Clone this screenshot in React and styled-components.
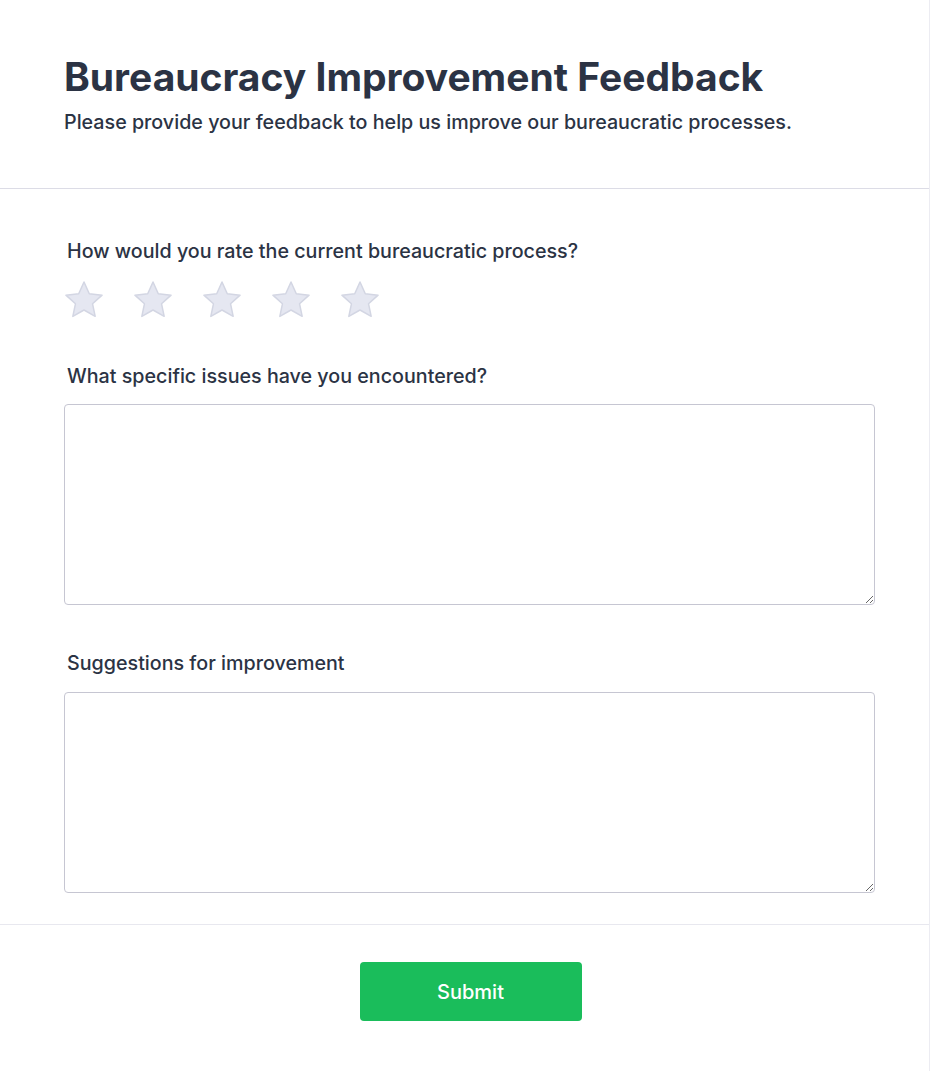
import React, { useState } from "react";
import styled, { createGlobalStyle } from "styled-components";

const GlobalStyle = createGlobalStyle`
  body {
    margin: 0;
    background: #ffffff;
    font-family: Inter, "Noto Sans", sans-serif;
  }
`;

const Card = styled.div`
  width: 929px;
  border-right: 1px solid #ececf2;
  background: #fff;
`;

const Header = styled.header`
  padding: 54px 64px 52px;
  border-bottom: 1px solid #dcdce6;
`;

const Title = styled.h1`
  margin: 0;
  font-size: 39px;
  line-height: 46px;
  font-weight: 700;
  color: #2b3344;
`;

const Subtitle = styled.p`
  margin: 8px 0 0;
  font-size: 19.7px;
  line-height: 28px;
  font-weight: 500;
  color: #2b3344;
`;

const Form = styled.form`
  padding: 48px 54px 31px 64px;
  border-bottom: 1px solid #e8e8ef;
`;

const Field = styled.div`
  margin-bottom: ${(p) => p.$gap ?? 44}px;
`;

const Label = styled.label`
  display: block;
  margin: 0 0 ${(p) => p.$below ?? 14}px 3px;
  font-size: 19.7px;
  line-height: 28px;
  font-weight: 500;
  color: #2b3344;
`;

const Stars = styled.div`
  display: flex;
  gap: 29px;
`;

const StarButton = styled.button`
  border: none;
  background: none;
  padding: 0;
  width: 40px;
  height: 40px;
  cursor: pointer;
  display: flex;
`;

const TextArea = styled.textarea`
  display: block;
  box-sizing: border-box;
  width: 811px;
  height: 201px;
  border: 1px solid #c6c6d2;
  border-radius: 4px;
  padding: 10px 12px;
  font-family: inherit;
  font-size: 16px;
  color: #2b3344;
  resize: vertical;
  outline: none;
`;

const Footer = styled.div`
  display: flex;
  justify-content: center;
  padding: 37px 0 50px 12px;
`;

const SubmitButton = styled.button`
  width: 222px;
  height: 59px;
  border: none;
  border-radius: 4px;
  background: #1abd5b;
  color: #fff;
  font-family: inherit;
  font-size: 20px;
  font-weight: 500;
  cursor: pointer;
`;

function Star({ filled }) {
  return (
    <svg width="40" height="40" viewBox="0 0 40 40">
      <path
        d="M20 2 L25.29 13.72 L38.07 15.13 L28.56 23.78 L31.17 36.37 L20 30 L8.83 36.37 L11.44 23.78 L1.93 15.13 L14.71 13.72 Z"
        fill={filled ? "#facc15" : "#e5e7f1"}
        stroke={filled ? "#eab308" : "#d3d6e3"}
        strokeWidth="1.5"
        strokeLinejoin="round"
      />
    </svg>
  );
}

export default function App() {
  const [rating, setRating] = useState(0);

  return (
    <Card>
      <GlobalStyle />
      <Header>
        <Title>Bureaucracy Improvement Feedback</Title>
        <Subtitle>Please provide your feedback to help us improve our bureaucratic processes.</Subtitle>
      </Header>
      <Form onSubmit={(e) => e.preventDefault()}>
        <Field $gap={42}>
          <Label $below={15}>How would you rate the current bureaucratic process?</Label>
          <Stars>
            {[1, 2, 3, 4, 5].map((n) => (
              <StarButton key={n} type="button" onClick={() => setRating(n)}>
                <Star filled={n <= rating} />
              </StarButton>
            ))}
          </Stars>
        </Field>
        <Field>
          <Label htmlFor="issues">What specific issues have you encountered?</Label>
          <TextArea id="issues" />
        </Field>
        <Field $gap={0}>
          <Label htmlFor="suggestions" $below={15}>Suggestions for improvement</Label>
          <TextArea id="suggestions" />
        </Field>
      </Form>
      <Footer>
        <SubmitButton type="submit">Submit</SubmitButton>
      </Footer>
    </Card>
  );
}
